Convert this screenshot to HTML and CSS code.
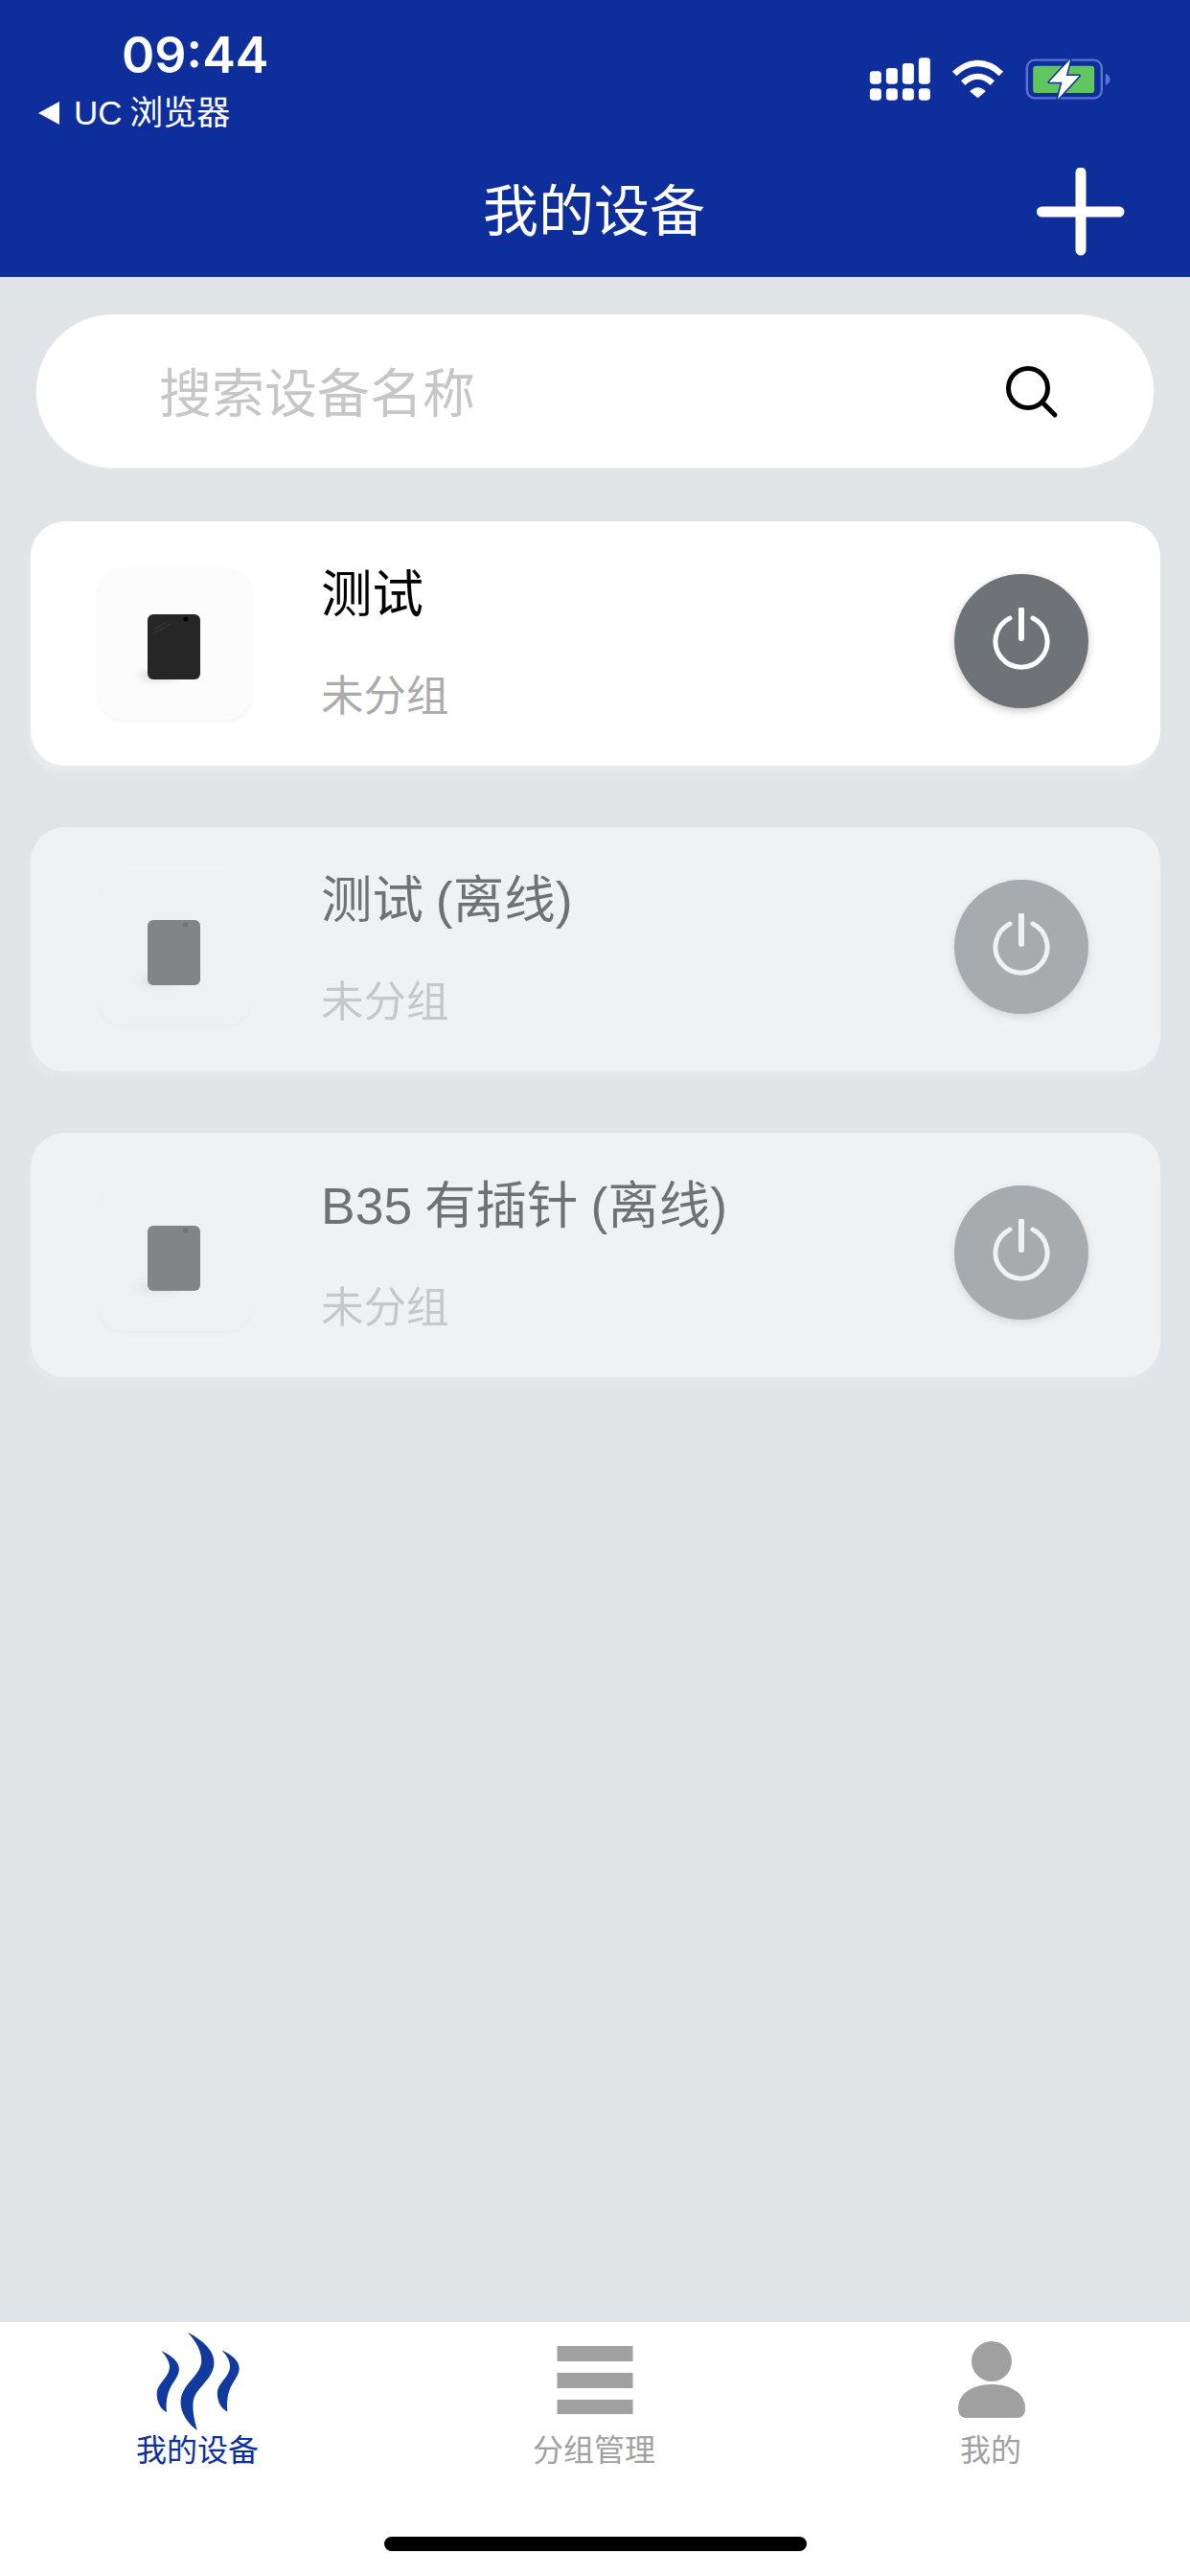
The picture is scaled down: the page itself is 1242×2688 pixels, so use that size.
FILE: index.html
```html
<!DOCTYPE html>
<html lang="zh-CN">
<head>
<meta charset="utf-8">
<title>我的设备</title>
<link rel="stylesheet" href="styles.css">
</head>
<body>
<div class="app">
  <header class="header">
    <div class="status">
      <div class="status-left">
        <div class="time">09:44</div>
        <div class="back"><span class="back-arrow"></span><span class="back-text">UC 浏览器</span></div>
      </div>
      <svg class="status-icons" viewBox="250 170 770 150" width="257" height="50">
        <g fill="#fff">
          <rect x="261" y="276" width="36" height="37" rx="10"/><rect x="312" y="276" width="36" height="37" rx="10"/><rect x="363" y="276" width="36" height="37" rx="10"/><rect x="414" y="276" width="36" height="37" rx="10"/>
          <rect x="261" y="222" width="36" height="40" rx="10"/><rect x="312" y="212" width="36" height="50" rx="10"/><rect x="363" y="197" width="36" height="65" rx="10"/><rect x="414" y="180" width="36" height="82" rx="10"/>
        </g>
        <g fill="none" stroke="#fff" stroke-width="19">
          <path d="M526 230C570 186 628 186 672 230"/>
          <path d="M553 259C582 232 616 232 645 259"/>
        </g>
        <path d="M574 285C590 269 608 269 624 285L599 306Z" fill="#fff"/>
        <rect x="753" y="187" width="234" height="119" rx="24" fill="none" stroke="#5a74cf" stroke-width="7"/>
        <rect x="772" y="205" width="192" height="85" rx="10" fill="#62c65f"/>
        <path d="M999 229C1009 233 1013 240 1013 248C1013 256 1009 262 999 266Z" fill="#5a74cf"/>
        <path d="M889 184L822 256L863 256L849 310L917 236L876 236Z" fill="#fff" stroke="#0e2e9c" stroke-width="9" stroke-linejoin="round" paint-order="stroke"/>
      </svg>
    </div>
    <div class="nav">
      <span></span>
      <h1 class="nav-title">我的设备</h1>
      <svg class="plus" viewBox="0 0 92 92" width="92" height="92"><path d="M46 5V86M5.500 46H86" stroke="#fff" stroke-width="11" stroke-linecap="round"/></svg>
    </div>
  </header>

  <main class="main">
    <div class="search">
      <span class="search-hint">搜索设备名称</span>
      <svg class="search-icon" viewBox="0 0 56 56" width="56" height="56"><circle cx="24" cy="24" r="20.5" fill="none" stroke="#000" stroke-width="5"/><path d="M39 39L52 52" stroke="#000" stroke-width="5" stroke-linecap="round"/></svg>
    </div>

    <div class="card">
      <div class="thumb"><svg class="device" viewBox="0 0 90 76" width="90" height="76"><ellipse class="device-shadow" cx="30" cy="65" rx="22" ry="4"/><rect x="18" y="1" width="55" height="68" rx="6" fill="#262626"/><path d="M24 17L38 9M24 21L42 11" stroke="#3a3a3a" stroke-width="1" fill="none"/><circle cx="58" cy="6" r="2.6" fill="#050505"/></svg></div>
      <div class="info"><div class="name">测试</div><div class="group">未分组</div></div>
      <div class="power"><svg viewBox="0 0 60 66" width="60" height="66"><path d="M18 11A27 27 0 1 0 42 11" fill="none" stroke="#fff" stroke-width="5" stroke-linecap="round"/><path d="M30 2V32" stroke="#fff" stroke-width="6" stroke-linecap="round"/></svg></div>
    </div>

    <div class="card offline">
      <div class="thumb"><svg class="device" viewBox="0 0 90 76" width="90" height="76"><ellipse class="device-shadow" cx="30" cy="65" rx="22" ry="4"/><rect x="18" y="1" width="55" height="68" rx="6" fill="#262626"/><circle cx="58" cy="6" r="2.6" fill="#050505"/></svg></div>
      <div class="info"><div class="name">测试 (离线)</div><div class="group">未分组</div></div>
      <div class="power"><svg viewBox="0 0 60 66" width="60" height="66"><path d="M18 11A27 27 0 1 0 42 11" fill="none" stroke="#fff" stroke-width="5" stroke-linecap="round"/><path d="M30 2V32" stroke="#fff" stroke-width="6" stroke-linecap="round"/></svg></div>
    </div>

    <div class="card offline">
      <div class="thumb"><svg class="device" viewBox="0 0 90 76" width="90" height="76"><ellipse class="device-shadow" cx="30" cy="65" rx="22" ry="4"/><rect x="18" y="1" width="55" height="68" rx="6" fill="#262626"/><circle cx="58" cy="6" r="2.6" fill="#050505"/></svg></div>
      <div class="info"><div class="name">B35 有插针 (离线)</div><div class="group">未分组</div></div>
      <div class="power"><svg viewBox="0 0 60 66" width="60" height="66"><path d="M18 11A27 27 0 1 0 42 11" fill="none" stroke="#fff" stroke-width="5" stroke-linecap="round"/><path d="M30 2V32" stroke="#fff" stroke-width="6" stroke-linecap="round"/></svg></div>
    </div>
  </main>

  <footer class="tabbar">
    <div class="tabs">
      <div class="tab active">
        <svg class="tab-icon" viewBox="240 90 280 320" width="93" height="107">
          <g fill="#123a9e">
            <path d="M345 97C400 125 430 160 428 195C425 250 365 270 362 320C360 350 368 380 375 405C345 385 322 350 323 315C325 260 385 235 388 190C390 155 370 125 345 97Z"/>
            <path d="M262 155C295 170 318 190 318 212C318 250 272 260 279 348C262 340 248 320 248 290C250 255 288 240 288 205C288 190 278 172 262 155Z"/>
            <path d="M452 153C485 168 507 188 507 210C507 248 462 258 470 347C452 338 438 318 438 288C440 253 478 238 478 203C478 188 468 170 452 153Z"/>
          </g>
        </svg>
        <span class="tab-label">我的设备</span>
      </div>
      <div class="tab">
        <svg class="tab-icon" viewBox="0 0 93 107" width="93" height="107"><g fill="#a0a0a0"><rect x="6.500" y="17" width="79" height="16"/><rect x="6.500" y="45" width="79" height="16"/><rect x="6.500" y="73" width="79" height="15"/></g></svg>
        <span class="tab-label">分组管理</span>
      </div>
      <div class="tab">
        <svg class="tab-icon" viewBox="0 0 93 107" width="93" height="107"><g fill="#a0a0a0"><ellipse cx="46" cy="33" rx="21" ry="21"/><path d="M11 82C11 65 28 57 46 57C64 57 81 65 81 82C81 88 78 92 73 92H19C14 92 11 88 11 82Z"/></g></svg>
        <span class="tab-label">我的</span>
      </div>
    </div>
    <div class="home-bar"></div>
  </footer>
</div>
</body>
</html>
```
FILE: styles.css
```css
* { box-sizing: border-box; }
html, body { margin: 0; padding: 0; }
body { font-family: "Liberation Sans", "Noto Sans CJK SC", sans-serif; }
.app { width: 1242px; height: 2688px; display: flex; flex-direction: column; background: #e1e4e7; overflow: hidden; }

.header { height: 289px; background: #0e2e9c; color: #fff; display: flex; flex-direction: column; flex: none; }
.status { height: 175px; display: flex; justify-content: space-between; align-items: flex-start; padding: 0 81px 0 40px; }
.status-left { display: flex; flex-direction: column; padding-top: 26px; }
.time { font-family: Inter, "Liberation Sans", sans-serif; font-weight: 600; font-size: 52px; line-height: 63px; margin-left: 87px; }
.back { display: flex; align-items: center; gap: 15px; font-size: 35px; line-height: 46px; margin-top: 6px; }
.back-text { word-spacing: -2px; }
.back-arrow { width: 0; height: 0; border-style: solid; border-width: 12px 22px 12px 0; border-color: transparent #fff transparent transparent; }
.status-icons { margin-top: 57px; display: block; }
.nav { display: grid; grid-template-columns: 1fr auto 1fr; align-items: center; height: 92px; padding-right: 68px; }
.nav-title { margin: 0; font-size: 58px; font-weight: 400; line-height: 92px; padding-left: 66px; }
.plus { justify-self: end; display: block; }

.main { flex: 1; display: flex; flex-direction: column; gap: 64px; padding: 39px 31px 0 32px; }
.search { height: 160px; margin: 0 7px -8px 6px; background: #fff; border-radius: 80px; display: flex; align-items: center; justify-content: space-between; padding: 0 99px 0 128px; box-shadow: 0 1px 3px rgba(255,255,255,.4); }
.search-hint { font-size: 55px; color: #c6c6c6; margin-top: -5px; }
.search-icon { display: block; margin-top: 2px; }

.card { height: 255px; background: #fff; border-radius: 36px; display: flex; align-items: center; padding: 0 75px 0 71px; box-shadow: -3px 8px 6px rgba(255,255,255,.25); }
.card.offline { opacity: .5; }
.thumb { width: 159px; height: 159px; flex: none; background: #fcfcfc; border-radius: 26px; margin-top: -1px; box-shadow: 0 2px 5px rgba(0,0,0,.05); display: flex; align-items: center; justify-content: center; }
.device { display: block; margin-top: 14px; margin-left: -4px; }
.device-shadow { fill: #000; opacity: .16; filter: blur(4px); }
.info { flex: 1; margin-left: 73px; display: flex; flex-direction: column; height: 100%; padding-top: 39px; }
.name { font-size: 53.500px; line-height: 76px; color: #000; word-spacing: -2px; }
.group { font-size: 44.500px; line-height: 60px; color: #ababab; margin-top: 38px; }
.power { width: 140px; height: 140px; flex: none; border-radius: 50%; margin-top: -6px; background: #6f7377; box-shadow: 0 3px 8px rgba(0,0,0,.22); display: flex; align-items: center; justify-content: center; }
.power svg { display: block; margin-top: -3px; }

.tabbar { height: 265px; flex: none; background: #fff; display: flex; flex-direction: column; align-items: center; }
.tabs { width: 100%; display: grid; grid-template-columns: repeat(3, 1fr); padding-top: 8px; }
.tab { display: flex; flex-direction: column; align-items: center; color: #a0a0a0; }
.tab.active { color: #0e2e9c; }
.tab-icon { display: block; }
.tab-label { font-size: 32px; line-height: 40px; margin: -1px 0 3px -2px; }
.home-bar { width: 441px; height: 15px; border-radius: 8px; background: #000; margin-top: 67px; }
```
